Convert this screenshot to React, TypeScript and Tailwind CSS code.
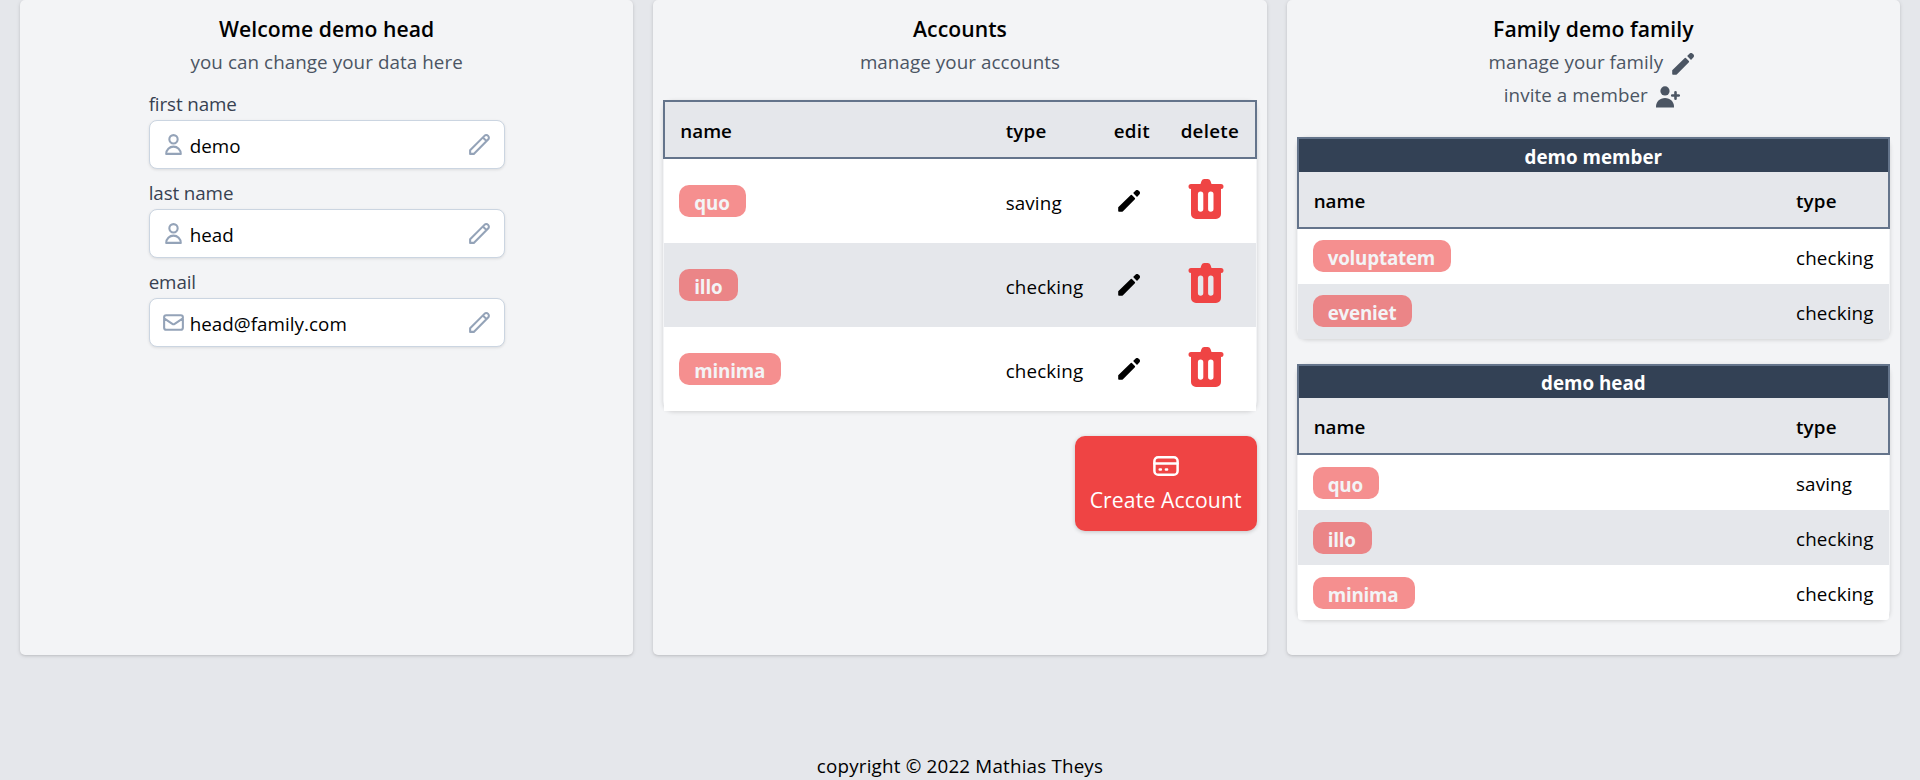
import React from 'react';

type Account = { name: string; type: string };

const accounts: Account[] = [
  { name: 'quo', type: 'saving' },
  { name: 'illo', type: 'checking' },
  { name: 'minima', type: 'checking' },
];

const memberAccounts: Account[] = [
  { name: 'voluptatem', type: 'checking' },
  { name: 'eveniet', type: 'checking' },
];

function OutlineIcon({ d }: { d: string }) {
  return (
    <svg viewBox="0 0 24 24" fill="none" stroke="currentColor" strokeWidth="2" strokeLinecap="round" strokeLinejoin="round" className="h-[25px] w-[25px] shrink-0">
      <path d={d} />
    </svg>
  );
}

const USER = 'M16 7a4 4 0 11-8 0 4 4 0 018 0zM12 14a7 7 0 00-7 7h14a7 7 0 00-7-7z';
const MAIL = 'M3 8l7.89 5.26a2 2 0 002.22 0L21 8M5 19h14a2 2 0 002-2V7a2 2 0 00-2-2H5a2 2 0 00-2 2v10a2 2 0 002 2z';
const PENCIL = 'M15.232 5.232l3.536 3.536m-2.036-5.036a2.5 2.5 0 113.536 3.536L6.5 21.036H3v-3.572L16.732 3.732z';

function SolidPencil({ className = '' }: { className?: string }) {
  return (
    <svg viewBox="0 0 22 22" fill="currentColor" className={`h-[22px] w-[22px] shrink-0 ${className}`}>
      <path d="M0.2 17.3 12.8 5.1a.8.8 0 0 1 1.1 0l3 3a.8.8 0 0 1 0 1.1L5 21.2a2 2 0 0 1-1.4.6H1a.8.8 0 0 1-.8-.8z" />
      <path d="M15.6 2.5 17.2.9a2.6 2.6 0 0 1 3.7 0l.2.2a2.6 2.6 0 0 1 0 3.7l-1.6 1.6a.7.7 0 0 1-1 0l-2.9-2.9a.7.7 0 0 1 0-1z" />
    </svg>
  );
}

function UserPlus({ className = '' }: { className?: string }) {
  return (
    <svg viewBox="0 0 24 22" fill="currentColor" className={`h-[22px] w-[24px] shrink-0 ${className}`}>
      <circle cx="9" cy="4.9" r="4.6" />
      <path d="M0 21.6v-1C0 15.8 3.8 12 9 12s9 3.8 9 8.6v1z" />
      <path d="M18.2 6.2a1.3 1.3 0 0 1 2.6 0v2h2a1.3 1.3 0 0 1 0 2.6h-2v2a1.3 1.3 0 0 1-2.6 0v-2h-2a1.3 1.3 0 0 1 0-2.6h2z" />
    </svg>
  );
}

function Trash() {
  return (
    <svg viewBox="0 0 36 40" className="h-[40px] w-[36px] text-[#ef4444]" fill="currentColor" fillRule="evenodd">
      <path d="M12.5 5 13.5 2Q14.2 0 16.3 0h3.4q2.1 0 2.8 2l1 3H33a2.5 2.5 0 0 1 0 5v25a5 5 0 0 1-5 5H8a5 5 0 0 1-5-5V10a2.500 2.500 0 0 1 0-5zM9.9 15.200v14.800a2.700 2.700 0 0 0 5.400 0v-14.800a2.700 2.700 0 0 0-5.400 0zM20.100 15.200v14.800a2.700 2.700 0 0 0 5.400 0v-14.800a2.700 2.700 0 0 0-5.400 0z" />
    </svg>
  );
}

function CardIcon() {
  return (
    <svg viewBox="0 0 26 20" className="h-[20px] w-[26px]" fill="none" stroke="currentColor" strokeWidth="2.5" strokeLinecap="round">
      <rect x="1.4" y="1.25" width="23.2" height="17.5" rx="3.8" />
      <path d="M1.4 7.5h23.2M6.7 13.5h1.2M12.900 13.5h1.2" />
    </svg>
  );
}

function Panel({ title, children }: { title: string; children: React.ReactNode }) {
  return (
    <section className="flex h-[655px] flex-1 flex-col rounded-[5px] bg-gray-100 px-[10px] pt-3 shadow-[0_1px_4px_rgba(0,0,0,0.12),0_1px_2px_rgba(0,0,0,0.08)]">
      <h2 className="text-center text-[21.15px] leading-[33px] font-semibold tracking-[0.06px] text-black">{title}</h2>
      {children}
    </section>
  );
}

function Subtitle({ children }: { children: React.ReactNode }) {
  return <div className="flex h-[33px] items-center justify-center pt-px tracking-[0.08px] text-[#4b5563]">{children}</div>;
}

function Field({ label, value, icon }: { label: string; value: string; icon: string }) {
  return (
    <div className="flex h-[89px] flex-col">
      <label className="h-[31px] leading-[30px] tracking-[-0.1px] text-[#374151]">{label}</label>
      <div className="flex h-[49px] items-center rounded-[8px] border border-[#cbd5e1] bg-white pr-[12px] pl-[11px] text-[#94a3b8] shadow-[0_1px_3px_rgba(0,0,0,0.1)]">
        <OutlineIcon d={icon} />
        <span className="flex-1 pt-[3px] pl-[4px] tracking-[0.05px] text-black">{value}</span>
        <OutlineIcon d={PENCIL} />
      </div>
    </div>
  );
}

function Chip({ name }: { name: string }) {
  return (
    <span className="h-8 rounded-[10px] bg-[#ef4444]/60 pt-[4px] pr-[16px] pl-[15px] leading-[28px] font-bold tracking-[-0.2px] text-gray-100">{name}</span>
  );
}

function FamilyTable({ owner, rows, ownerClass, chipClass }: { owner: string; rows: Account[]; ownerClass: string; chipClass: string }) {
  return (
    <div className="flex flex-col rounded-[10px] shadow-[0_1px_4px_rgba(0,0,0,0.15)]">
      <div className="border-2 border-[#64748b]">
        <div className={`flex items-center justify-center bg-[#334155] font-bold text-white ${ownerClass}`}>{owner}</div>
        <div className="flex h-[55px] items-center bg-gray-200 pt-[3px] pl-[15px] font-semibold">
          <span className="flex-1">name</span>
          <span className="w-[92px] tracking-[0.2px]">type</span>
        </div>
      </div>
      {rows.map((row) => (
        <div key={row.name} className="mx-px flex h-[55px] items-center bg-white pl-[15px] odd:bg-gray-200 last:rounded-b-[3px]">
          <span className={`flex flex-1 ${chipClass}`}>
            <Chip name={row.name} />
          </span>
          <span className="w-[93px] pt-[3px] tracking-[0.15px]">{row.type}</span>
        </div>
      ))}
    </div>
  );
}

export default function App() {
  return (
    <div className="flex h-[780px] w-full flex-col overflow-hidden bg-gray-200 font-['Open_Sans','Noto_Sans',sans-serif] text-[18.8px] leading-[28px] text-black">
      <main className="flex gap-5 px-5">
        <Panel title="Welcome demo head">
          <Subtitle>you can change your data here</Subtitle>
          <form className="mx-auto mt-[11px] w-[356px]">
            <Field label="first name" value="demo" icon={USER} />
            <Field label="last name" value="head" icon={USER} />
            <Field label="email" value="head@family.com" icon={MAIL} />
          </form>
        </Panel>

        <Panel title="Accounts">
          <Subtitle>manage your accounts</Subtitle>
          <div className="mt-[22px] flex flex-col rounded-[10px] shadow-[0_1px_4px_rgba(0,0,0,0.15)]">
            <div className="flex h-[59px] items-center border-2 border-[#64748b] bg-gray-200 pt-[3px] pl-[15px] font-semibold">
              <span className="flex-1">name</span>
              <span className="w-[108px] tracking-[0.2px]">type</span>
              <span className="w-[67px] tracking-[0.3px]">edit</span>
              <span className="w-[74px] tracking-[0.25px]">delete</span>
            </div>
            {accounts.map((account) => (
              <div key={account.name} className="mx-px flex h-[84px] items-center bg-white pl-[15px] odd:bg-gray-200">
                <span className="flex flex-1">
                  <Chip name={account.name} />
                </span>
                <span className="w-[112px] pt-[4px] tracking-[0.15px]">{account.type}</span>
                <span className="w-[70px]">
                  <SolidPencil />
                </span>
                <span className="w-[68px] pb-[4px]">
                  <Trash />
                </span>
              </div>
            ))}
          </div>
          <button className="mt-[25px] flex h-[95px] w-[182px] flex-col items-center self-end rounded-[10px] bg-[#ef4444] pt-5 text-white shadow-[0_1px_4px_rgba(0,0,0,0.2)]">
            <CardIcon />
            <span className="pt-[7px] text-[21.15px] leading-[33px] tracking-[0.12px]">Create Account</span>
          </button>
        </Panel>

        <Panel title="Family demo family">
          <Subtitle>
            manage your family
            <SolidPencil className="mt-[4px] mr-[4px] ml-[9px]" />
          </Subtitle>
          <Subtitle>
            invite a member
            <UserPlus className="mt-[4px] mr-[3px] ml-[8px]" />
          </Subtitle>
          <div className="mt-[26px] flex flex-col gap-[25px]">
            <FamilyTable owner="demo member" rows={memberAccounts} ownerClass="h-[33px] pt-[3px]" chipClass="pb-px" />
            <FamilyTable owner="demo head" rows={accounts} ownerClass="h-[32px] pt-[2px]" chipClass="pt-px" />
          </div>
        </Panel>
      </main>
      <footer className="mt-[97px] text-center tracking-[0.19px]">copyright © 2022 Mathias Theys</footer>
    </div>
  );
}
